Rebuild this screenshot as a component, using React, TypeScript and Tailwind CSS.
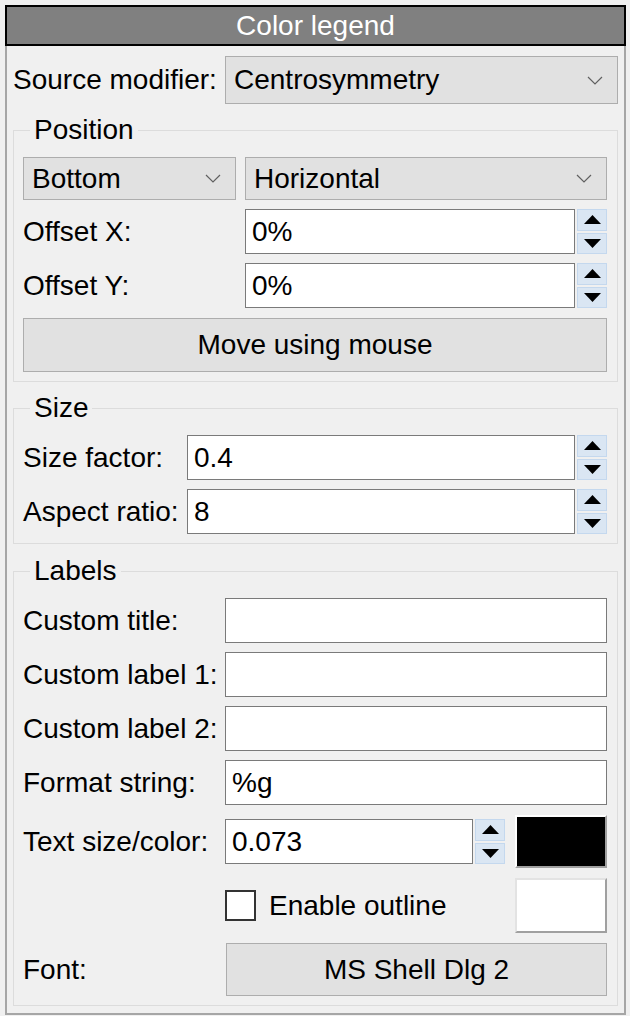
import type { ReactNode } from "react";

function Chevron() {
    return (
        <svg width="16" height="9" viewBox="0 0 16 9" className="shrink-0">
            <polyline points="1,1 8,8 15,1" fill="none" stroke="#606060" strokeWidth="1.2" />
        </svg>
    )
}

function ComboBox({ value, className = "" }: { value: string, className?: string }) {
    return (
        <div className={`flex items-center justify-between bg-[#e1e1e1] border border-[#adadad] pl-[8px] pr-[14px] ${className}`}>
            <span className="leading-none">{value}</span>
            <Chevron />
        </div>
    )
}

function Arrow({ up }: { up?: boolean }) {
    return (
        <svg width="17" height="9" viewBox="0 0 17 9">
            <polygon points={up ? "8.5,0 17,9 0,9" : "0,0 17,0 8.5,9"} fill="#000" />
        </svg>
    )
}

function SpinBox({ value, className = "" }: { value: string, className?: string }) {
    return (
        <div className={`flex h-[45px] gap-[2px] ${className}`}>
            <div className="flex-1 flex items-center bg-white border border-[#7a7a7a] pl-[6px] leading-none">{value}</div>
            <div className="w-[30px] flex flex-col gap-[2px]">
                <div className="flex-1 flex items-center justify-center bg-[#dae6f3] border border-[#c4d8ee]"><Arrow up /></div>
                <div className="flex-1 flex items-center justify-center bg-[#dae6f3] border border-[#c4d8ee]"><Arrow /></div>
            </div>
        </div>
    )
}

function LineEdit({ value = "" }: { value?: string }) {
    return (
        <div className="h-[45px] flex items-center bg-white border border-[#7a7a7a] pl-[6px] leading-none">{value}</div>
    )
}

function Group({ title, children, className = "" }: { title: string, children: ReactNode, className?: string }) {
    return (
        <fieldset className={`border border-[#dcdcdc] pl-[9px] pr-[10px] pt-[13px] pb-[9px] ${className}`}>
            <legend className="ml-[7px] px-[4px] leading-[28px]">{title}</legend>
            {children}
        </fieldset>
    )
}

function Label({ children }: { children: ReactNode }) {
    return <div className="flex items-center leading-none">{children}</div>
}

export default function App() {
    return (
        <div className="w-[630px] h-[1016px] bg-[#f0f0f0] pt-[5px] pl-[5px] pr-[4px] text-[28px] text-black font-['Liberation_Sans',Arial,sans-serif]">
            <div className="h-[41px] border-2 border-black bg-[#808080] text-white flex items-center justify-center leading-none">
                Color legend
            </div>

            <div className="border-2 border-t-0 border-[#a6a6a6] px-[6px] pt-[10px] pb-[7px]">
                <div className="flex items-center justify-between">
                    <Label>Source modifier:</Label>
                    <ComboBox value="Centrosymmetry" className="w-[393px] h-[48px]" />
                </div>

                <Group title="Position" className="mt-[12px]">
                    <div className="grid grid-cols-[213px_1fr] gap-x-[9px] gap-y-[9px]">
                        <ComboBox value="Bottom" className="h-[43px]" />
                        <ComboBox value="Horizontal" className="h-[43px]" />
                        <Label>Offset X:</Label>
                        <SpinBox value="0%" />
                        <Label>Offset Y:</Label>
                        <SpinBox value="0%" />
                    </div>
                    <div className="mt-[10px] h-[54px] flex items-center justify-center bg-[#e1e1e1] border border-[#adadad] leading-none">
                        Move using mouse
                    </div>
                </Group>

                <Group title="Size" className="mt-[12px]">
                    <div className="grid grid-cols-[164px_1fr] gap-y-[9px]">
                        <Label>Size factor:</Label>
                        <SpinBox value="0.4" />
                        <Label>Aspect ratio:</Label>
                        <SpinBox value="8" />
                    </div>
                </Group>

                <Group title="Labels" className="mt-[13px]">
                    <div className="grid grid-cols-[202px_1fr] gap-y-[9px]">
                        <Label>Custom title:</Label>
                        <LineEdit />
                        <Label>Custom label 1:</Label>
                        <LineEdit />
                        <Label>Custom label 2:</Label>
                        <LineEdit />
                        <Label>Format string:</Label>
                        <LineEdit value="%g" />
                    </div>
                    <div className="grid grid-cols-[202px_1fr] gap-y-[10px] mt-[10px]">
                        <Label>Text size/color:</Label>
                        <div className="flex items-center gap-[10px]">
                            <SpinBox value="0.073" className="flex-1" />
                            <div className="w-[92px] h-[53px] bg-black border-2 border-t-white border-l-white border-r-[#a0a0a0] border-b-[#a0a0a0]" />
                        </div>
                        <div />
                        <div className="flex items-center gap-[10px]">
                            <div className="flex-1 flex items-center gap-[13px]">
                                <div className="w-[31px] h-[31px] bg-white border-2 border-[#333333]" />
                                <span className="leading-none">Enable outline</span>
                            </div>
                            <div className="w-[92px] h-[55px] bg-white border-2 border-t-[#e3e3e3] border-l-[#e3e3e3] border-r-[#a0a0a0] border-b-[#a0a0a0]" />
                        </div>
                        <Label>Font:</Label>
                        <div className="h-[53px] ml-[1px] flex items-center justify-center bg-[#e1e1e1] border border-[#adadad] leading-none">
                            MS Shell Dlg 2
                        </div>
                    </div>
                </Group>
            </div>
        </div>
    )
}
